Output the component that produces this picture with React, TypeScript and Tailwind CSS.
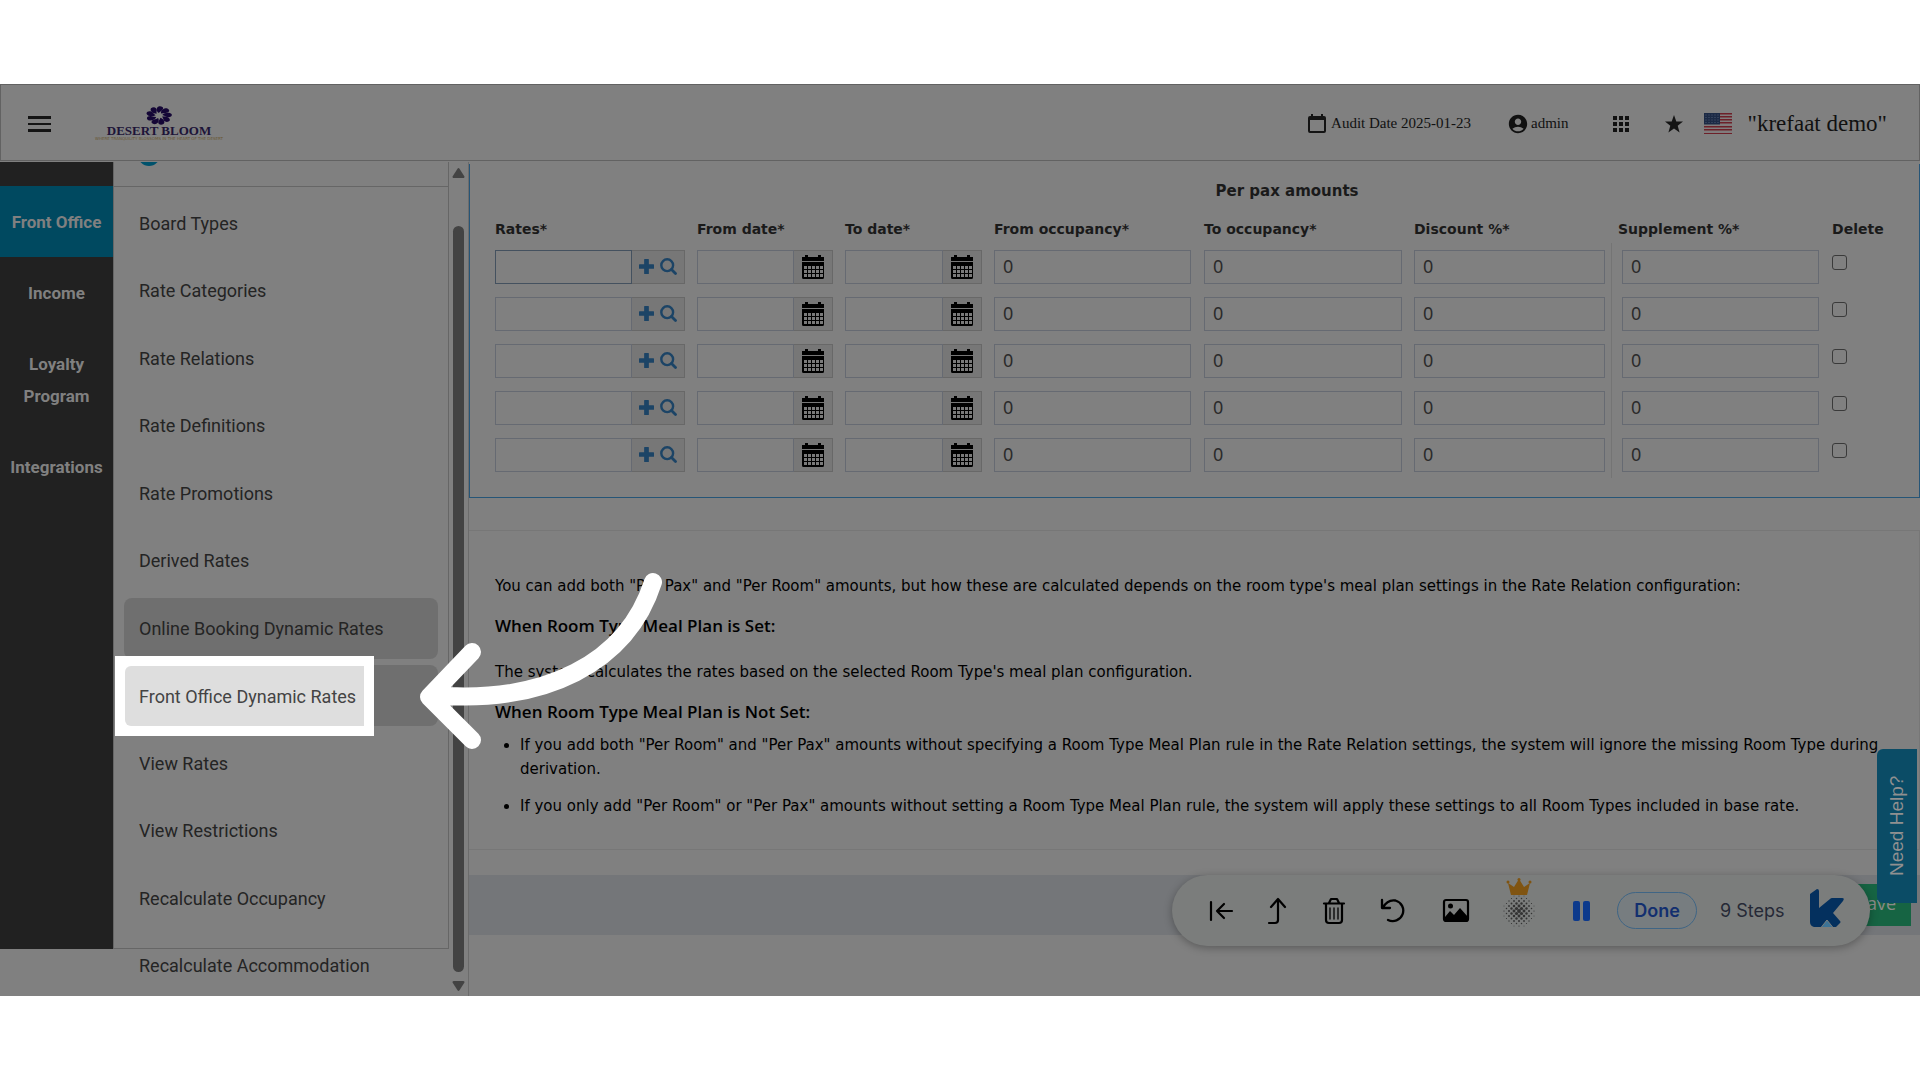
import { MdAccountCircle, MdApps } from 'react-icons/md';

const SECTIONS = ['Front Office', 'Income', 'Loyalty Program', 'Integrations'];

const MENU_ITEMS = [
  'Board Types',
  'Rate Categories',
  'Rate Relations',
  'Rate Definitions',
  'Rate Promotions',
  'Derived Rates',
  'Online Booking Dynamic Rates',
  'Front Office Dynamic Rates',
  'View Rates',
  'View Restrictions',
  'Recalculate Occupancy',
  'Recalculate Accommodation',
];

const HOVERED = 'Online Booking Dynamic Rates';
const SPOTLIGHT = 'Front Office Dynamic Rates';

const COLUMNS = [
  { label: 'Rates*', width: 'w-[202px]' },
  { label: 'From date*', width: 'w-[148px]' },
  { label: 'To date*', width: 'w-[149px]' },
  { label: 'From occupancy*', width: 'w-[210px]' },
  { label: 'To occupancy*', width: 'w-[210px]' },
  { label: 'Discount %*', width: 'w-[204px]' },
  { label: 'Supplement %*', width: 'w-[214px]' },
  { label: 'Delete', width: 'w-[62px]' },
];

const ROWS = [1, 2, 3, 4, 5];

const PETALS = [0, 40, 80, 120, 160, 200, 240, 280, 320];

// halftone disc: dots shrink towards the rim
const BLUR_DOTS = Array.from({ length: 169 }, (_, i) => {
  const col = i % 13;
  const row = Math.floor(i / 13);
  const dx = (col - 6) * 2.5;
  const dy = (row - 6) * 2.5;
  return { x: 16 + dx, y: 33 + dy, r: 1.9 - Math.hypot(dx, dy) * 0.09, odd: (col + row) % 2 };
}).filter((d) => d.odd === 0 && d.r > 0.45);

/* ---------- icons ---------- */

const CalendarOutline = () => (
  <svg width="18" height="19" viewBox="0 0 18 19" fill="#141414">
    <path d="M3 0h2v2h8V0h2v2h1a2 2 0 0 1 2 2v13a2 2 0 0 1-2 2H2a2 2 0 0 1-2-2V4a2 2 0 0 1 2-2h1zM2 6v11h14V6z" />
  </svg>
);

const StarIcon = () => (
  <svg width="20" height="20" viewBox="0 0 20 20" fill="#141414">
    <path d="M10 1l2.300 6.400 6.700.2-5.300 4.100L15.600 18.500 10 14.600 4.400 18.500l1.900-6.800L1 7.600l6.700-.2z" />
  </svg>
);

const FlagIcon = () => (
  <svg width="28" height="21" viewBox="0 0 28 21">
    <rect width="28" height="21" fill="#807c7d" />
    {[0, 3, 6, 9, 13, 16, 20].map((y) => (
      <rect key={y} y={y} width="28" height="1.500" fill="#6d2029" />
    ))}
    <rect width="16" height="11.500" fill="#1c2a45" />
    {[1.5, 4, 6.5, 9].map((y) =>
      [1.5, 4.5, 7.5, 10.5, 13.5].map((x) => (
        <rect key={`${x}-${y}`} x={x} y={y} width="1" height="1" fill="#4b5973" />
      ))
    )}
  </svg>
);

const PlusIcon = () => (
  <svg width="15" height="15" viewBox="0 0 14 14" fill="#1c4466">
    <path d="M5.300 0h3.400a.5.5 0 0 1 .5.5v4.300h4.300a.5.5 0 0 1 .5.5v3.400a.5.5 0 0 1-.5.5H9.200v4.300a.5.5 0 0 1-.5.5H5.300a.5.5 0 0 1-.5-.5V9.200H.5a.5.5 0 0 1-.5-.5V5.300a.5.5 0 0 1 .5-.5h4.300V.5a.5.5 0 0 1 .5-.5z" />
  </svg>
);

const SearchIcon = () => (
  <svg width="17" height="17" viewBox="0 0 17 17" fill="none" stroke="#1c4466">
    <circle cx="7.200" cy="7.200" r="5.900" strokeWidth="2.400" />
    <path d="M11.500 11.500l4 4" strokeWidth="2.800" strokeLinecap="round" />
  </svg>
);

const CalendarIcon = () => (
  <svg width="22" height="24" viewBox="0 0 22 24">
    <path d="M0 2h22v4H0zM3 0h3v3H3zM16 0h3v3h-3zM0 7h22v15.500a1.500 1.500 0 0 1-1.500 1.500h-19A1.500 1.500 0 0 1 0 22.500z" fill="#000" />
    {[11, 15, 19].map((y) =>
      [2, 6, 10, 14, 18].map((x) => (
        <rect key={`${x}-${y}`} x={x} y={y} width="3" height="3" fill="#7a7a7a" />
      ))
    )}
  </svg>
);

/* ---------- header ---------- */

const Logo = () => (
  <div className="flex w-[142px] flex-col items-center">
    <svg width="26" height="19" viewBox="-13 -9.500 26 19" fill="#140636">
      <g transform="scale(1.300 .95)">
        {PETALS.map((deg) => (
          <path key={deg} d="M-.2-2.600C-2.200-4.500-2.600-8.500.2-9.800 3.400-10.200 4-7 2.200-5.300 1.200-4.500.4-3.600-.2-2.600z" transform={`rotate(${deg})`} />
        ))}
      </g>
    </svg>
    <span className="whitespace-nowrap font-['Liberation_Serif',serif] text-[13px] leading-[11px] font-bold text-[#1d1438]">
      DESERT BLOOM
    </span>
    <span className="whitespace-nowrap font-['DejaVu_Sans',sans-serif] text-[4px] leading-[5px] text-[#685733]">
      WHERE TRANQUILITY BLOSSOMS IN THE HEART OF THE DESERT
    </span>
  </div>
);

const Header = () => (
  <header className="flex h-[77px] shrink-0 items-center border border-[#626262] pt-0.5 pr-8 pl-[27px] font-['Liberation_Serif',serif] text-[15px] text-[#111]">
    <button aria-label="Toggle menu" className="flex w-[23px] flex-col gap-1">
      <span className="h-[3px] bg-[#141414]" />
      <span className="h-[2px] bg-[#141414]" />
      <span className="h-[3px] bg-[#141414]" />
    </button>
    <div className="ml-[37px]">
      <Logo />
    </div>
    <div className="ml-auto flex items-center">
      <CalendarOutline />
      <span className="ml-[5px]">Audit Date 2025-01-23</span>
      <button className="ml-9 flex items-center gap-[2px]">
        <MdAccountCircle size={22} />
        admin
      </button>
      <button aria-label="Apps" className="ml-10">
        <MdApps size={24} />
      </button>
      <button aria-label="Favourites" className="ml-[31px]">
        <StarIcon />
      </button>
      <button aria-label="Language" className="ml-5">
        <FlagIcon />
      </button>
      <span className="ml-4 text-[23px] leading-7">"krefaat demo"</span>
    </div>
  </header>
);

/* ---------- side navigation ---------- */

const SectionNav = () => (
  <nav className="mb-[47px] w-[113px] shrink-0 bg-[#212121] pt-6 text-center font-[Roboto,sans-serif] text-[17px] leading-8 font-bold text-[#808080]">
    {SECTIONS.map((label, i) => (
      <a
        key={label}
        href="#"
        className={`block px-2 pt-5 pb-[19px] ${i === 0 ? 'bg-[#004960]' : ''}`}
      >
        {label}
      </a>
    ))}
  </nav>
);

const MenuItem = ({ label }: { label: string }) => {
  const shaded = label === HOVERED || label === SPOTLIGHT;
  return (
    <li className={`relative rounded-lg ${shaded ? 'bg-[#6f6f6f]' : ''}`}>
      <a href="#" className="flex h-[61px] items-center px-[15px]">
        {label}
      </a>
      {label === SPOTLIGHT && (
        <span
          aria-hidden="true"
          className="absolute -top-[9px] -left-[9px] flex h-20 w-[259px] items-center border-10 border-white bg-white text-[#444]"
        >
          <span className="flex h-full w-full items-center rounded-l-md bg-[#dedede] pl-[14px] whitespace-nowrap">
            {label}
          </span>
        </span>
      )}
    </li>
  );
};

const SideMenu = () => (
  <div className="relative flex w-[336px] shrink-0 flex-col">
    {/* panel frame stops short of the list, which runs past it */}
    <div className="absolute inset-x-0 top-0 bottom-[47px] border-x border-b border-[#666]" />
    <div className="relative h-[25px] overflow-hidden border-b border-[#666]">
      <div className="-mt-[18px] ml-[25px] size-[22px] rounded-full bg-[#00526c]" />
    </div>
    <ul className="relative flex flex-1 flex-col justify-between pt-[6px] pr-[11px] pl-[11px] font-[Roboto,sans-serif] text-[18px] text-[#242424]">
      {MENU_ITEMS.map((label) => (
        <MenuItem key={label} label={label} />
      ))}
    </ul>
  </div>
);

const ScrollTrack = () => (
  <div className="flex w-5 shrink-0 flex-col items-center border-r border-[#6c6c6c] pt-1.5 pb-[5px]">
    <svg width="13" height="10" viewBox="0 0 12 10" fill="#434343">
      <path d="M5 .8a1.200 1.200 0 0 1 2 0l4.800 7.400A1.200 1.200 0 0 1 10.800 10H1.200A1.200 1.200 0 0 1 .2 8.200z" />
    </svg>
    <div className="mt-12 mb-[9px] w-[11px] flex-1 rounded-full bg-[#434343]" />
    <svg width="13" height="10" viewBox="0 0 12 10" fill="#434343">
      <path d="M5 9.200a1.200 1.200 0 0 0 2 0l4.800-7.400A1.200 1.200 0 0 0 10.800 0H1.200A1.200 1.200 0 0 0 .2 1.800z" />
    </svg>
  </div>
);

/* ---------- rates table ---------- */

const RateField = ({ row }: { row: number }) => (
  <div className="mr-3 flex h-[34px]">
    <input
      aria-label={`Rate ${row}`}
      className={`w-0 flex-1 border px-2 outline-none ${row === 1 ? 'border-[#44515f]' : 'border-[#666a72]'}`}
    />
    <div className="flex w-[53px] items-center justify-center gap-[6px] border border-l-0 border-[#686868] bg-[#777]">
      <button aria-label="Add rate">
        <PlusIcon />
      </button>
      <button aria-label="Search rate">
        <SearchIcon />
      </button>
    </div>
  </div>
);

const DateField = ({ label }: { label: string }) => (
  <div className="mr-3 flex h-[34px]">
    <input aria-label={label} className="w-0 flex-1 border border-[#666a72] px-2" />
    <button
      aria-label={`Pick ${label}`}
      className="flex w-[39px] items-center justify-center border border-l-0 border-[#686868] bg-[#777]"
    >
      <CalendarIcon />
    </button>
  </div>
);

const NumberField = ({ label }: { label: string }) => (
  <input
    aria-label={label}
    defaultValue="0"
    className="block h-[34px] w-full border border-[#666a72] px-2 pb-0.5 font-['Noto_Sans',sans-serif] text-[18px] text-[#2b2b2b]"
  />
);

const RatesPanel = () => (
  <section className="mt-0.5 border-x border-b border-[#265577] pt-[17px] pr-[25px] pb-[19px] pl-[25px] font-['DejaVu_Sans',sans-serif]">
    <table className="w-full table-fixed text-left">
      <colgroup>
        {COLUMNS.map((c) => (
          <col key={c.label} className={c.width} />
        ))}
      </colgroup>
      <thead className="text-[14px] font-bold text-[#1a1a1a]">
        <tr className="h-5">
          <th colSpan={3} />
          <th colSpan={3} className="pr-[38px] text-center text-[15px] leading-5">
            Per pax amounts
          </th>
          <th colSpan={2} />
        </tr>
        <tr className="h-[42px]">
          {COLUMNS.map((c) => (
            <th key={c.label} className="pt-[14px] align-top leading-7">
              {c.label}
            </th>
          ))}
        </tr>
      </thead>
      <tbody>
        {ROWS.map((row) => (
          <tr key={row} className="h-[47px]">
            <td>
              <RateField row={row} />
            </td>
            <td>
              <DateField label={`From date ${row}`} />
            </td>
            <td>
              <DateField label={`To date ${row}`} />
            </td>
            <td className="pr-[13px]">
              <NumberField label={`From occupancy ${row}`} />
            </td>
            <td className="pr-3">
              <NumberField label={`To occupancy ${row}`} />
            </td>
            <td>
              <div className="mr-[6px] flex h-[47px] items-center border-r border-[#747474] pr-[6px]">
                <NumberField label={`Discount ${row}`} />
              </div>
            </td>
            <td className="pr-[13px] pl-1">
              <NumberField label={`Supplement ${row}`} />
            </td>
            <td className="pt-3 align-top">
              <input
                type="checkbox"
                aria-label={`Delete row ${row}`}
                className="block size-[15px] appearance-none rounded-[3px] border border-[#3a3a3a]"
              />
            </td>
          </tr>
        ))}
      </tbody>
    </table>
  </section>
);

const Notes = () => (
  <section className="mt-8 border border-l-0 border-[#777] pt-[43px] pr-[25px] pb-[31px] pl-[26px] font-['DejaVu_Sans',sans-serif] text-[15px] leading-6 text-black">
    <p>
      You can add both "Per Pax" and "Per Room" amounts, but how these are calculated depends on the room type's meal
      plan settings in the Rate Relation configuration:
    </p>
    <h2 className="mt-4 font-['Open_Sans',sans-serif] text-[17px] leading-6 font-semibold">
      When Room Type Meal Plan is Set:
    </h2>
    <p className="mt-[22px]">The system calculates the rates based on the selected Room Type's meal plan configuration.</p>
    <h2 className="mt-4 font-['Open_Sans',sans-serif] text-[17px] leading-6 font-semibold">
      When Room Type Meal Plan is Not Set:
    </h2>
    <ul className="mt-[9px] list-disc pl-[25px]">
      <li>
        If you add both "Per Room" and "Per Pax" amounts without specifying a Room Type Meal Plan rule in the Rate
        Relation settings, the system will ignore the missing Room Type during derivation.
      </li>
      <li className="mt-[13px]">
        If you only add "Per Room" or "Per Pax" amounts without setting a Room Type Meal Plan rule, the system will
        apply these settings to all Room Types included in base rate.
      </li>
    </ul>
  </section>
);

/* ---------- recorder toolbar ---------- */

const RecorderBar = () => (
  <div className="absolute right-[50px] bottom-[50px] flex h-[71px] w-[698px] items-center rounded-full bg-[#7b7d7c] pl-9 font-[Inter,sans-serif] text-[18px] shadow-[0_2px_8px_rgba(0,0,0,0.3)]">
    <button aria-label="Collapse">
      <svg width="26" height="26" viewBox="0 0 26 26" fill="none" stroke="#000" strokeWidth="2.200" strokeLinecap="round" strokeLinejoin="round">
        <path d="M3 4v18M24 13H9M16 6l-7 7 7 7" />
      </svg>
    </button>
    <button aria-label="Insert step" className="ml-[33px]">
      <svg width="22" height="28" viewBox="0 0 22 28" fill="none" stroke="#000" strokeWidth="2.200" strokeLinecap="round" strokeLinejoin="round">
        <path d="M4 10l7-8 7 8M11 2v21a3 3 0 0 1-3 3H2" />
      </svg>
    </button>
    <button aria-label="Delete" className="ml-[33px]">
      <svg width="24" height="28" viewBox="0 0 24 28" fill="none" stroke="#000" strokeWidth="2.200" strokeLinecap="round" strokeLinejoin="round">
        <path d="M2 6.500h20M7 6l2-4h6l2 4M4 7v16a3 3 0 0 0 3 3h10a3 3 0 0 0 3-3V7" />
        <path d="M8 11v11M12 11v11M16 11v11" strokeWidth="1.300" />
      </svg>
    </button>
    <button aria-label="Restart" className="ml-[34px]">
      <svg width="26" height="26" viewBox="0 0 26 26" fill="none" stroke="#000" strokeWidth="2.300" strokeLinecap="round" strokeLinejoin="round">
        <path d="M2 2v8h8M3 9.500C6 4 11 1.800 15.500 2.500A10.500 10.500 0 1 1 8 22" />
      </svg>
    </button>
    <button aria-label="Screenshot" className="ml-9">
      <svg width="28" height="26" viewBox="0 0 28 26">
        <rect x="2" y="2" width="24" height="21" rx="2" fill="none" stroke="#000" strokeWidth="2.200" />
        <circle cx="8.500" cy="8" r="2.500" />
        <path d="M3 22v-3l5-6 4 4 6-7 8 9v3z" />
      </svg>
    </button>
    <button aria-label="Blur" className="ml-[33px]">
      <svg width="32" height="50" viewBox="0 0 32 50" className="mb-4">
        <path d="M8 17L5 5l6 4 5-8 5 8 6-4-3 12z" fill="#805411" />
        <circle cx="5" cy="4" r="1.500" fill="#805411" />
        <circle cx="16" cy="1.500" r="1.500" fill="#805411" />
        <circle cx="27" cy="4" r="1.500" fill="#805411" />
        {BLUR_DOTS.map((d) => (
          <circle key={`${d.x}-${d.y}`} cx={d.x} cy={d.y} r={d.r} fill="#333" />
        ))}
      </svg>
    </button>
    <button aria-label="Pause" className="ml-[38px] flex gap-[3px]">
      <span className="h-5 w-[7px] rounded-xs bg-[#0d3a8c]" />
      <span className="h-5 w-[7px] rounded-xs bg-[#0d3a8c]" />
    </button>
    <button className="ml-[27px] h-[37px] w-20 rounded-full border border-[#3f6585] bg-[#777d80] font-semibold text-[#122f6f]">
      Done
    </button>
    <span className="ml-[23px] text-[#262936]">9 Steps</span>
    <svg width="34" height="39" viewBox="0 0 34 39" className="mb-1 ml-[25px]">
      <path d="M0 5l7-5q2 0 2 2v17L20 10q1-1 2-1h10q3 0 1 3L23 24l7 8q1 1 0 2l-4 4h-5l-4-7-5 7H4q-4-1-4-5z" fill="#04305e" />
      <path d="M17 31l6 7.500H11z" fill="#3d7396" stroke="#7b7d7c" strokeWidth="1" />
    </svg>
  </div>
);

const PointerArrow = () => (
  <svg
    className="pointer-events-none absolute top-[480px] left-[410px]"
    width="264"
    height="190"
    viewBox="410 564 264 190"
    fill="none"
    stroke="#fff"
    strokeWidth="18"
    strokeLinecap="round"
    strokeLinejoin="round"
  >
    <path d="M472 652L429 697l43 43M432 695C545 705 627 663 653 582" />
  </svg>
);

export default function App() {
  return (
    <div className="flex min-h-screen flex-col bg-white py-[84px]">
      <div className="relative flex flex-1 flex-col bg-[#808080]">
        <Header />
        <div className="mt-px flex flex-1">
          <SectionNav />
          <SideMenu />
          <ScrollTrack />
          <main className="min-w-0 flex-1">
            <RatesPanel />
            <Notes />
            <div className="mt-[25px] flex h-[60px] items-center justify-end bg-[#747679] pr-[9px]">
              <button className="h-[42px] bg-[#166443] px-[15px] pb-1 font-['Open_Sans',sans-serif] text-[18px] text-[#8a8a8a]">
                Save
              </button>
            </div>
          </main>
        </div>
        <RecorderBar />
        <button className="absolute right-[3px] bottom-[93px] flex h-[154px] w-10 rotate-180 items-center justify-center rounded-r-md bg-[#0b4c66] font-['Liberation_Sans',sans-serif] text-[19px] text-[#909090] [writing-mode:vertical-rl]">
          Need Help?
        </button>
        <PointerArrow />
      </div>
    </div>
  );
}
